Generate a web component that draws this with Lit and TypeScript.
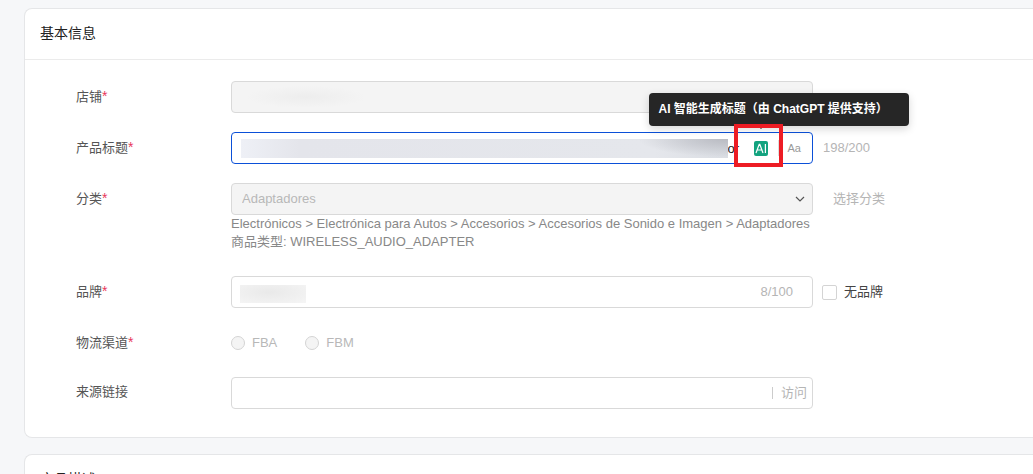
import { LitElement, html, css } from "lit";
import { customElement } from "lit/decorators.js";

@customElement("app-root")
export class AppRoot extends LitElement {
  static styles = css`
    :host {
      display: block;
      height: 100vh;
      overflow: hidden;
      background: #f6f7f9;
      color: #555;
      font: 13px/18px "Liberation Sans", "Noto Sans CJK SC", sans-serif;
    }
    * {
      box-sizing: border-box;
    }
    input,
    select,
    button {
      font: inherit;
      color: inherit;
      margin: 0;
      padding: 0;
      border: 0;
      background: none;
      outline: none;
    }
    .page {
      display: flex;
      flex-direction: column;
      gap: 16px;
      padding: 8px 0 0 24px;
    }
    .card {
      background: #fff;
      border: 1px solid #e5e6e8;
      border-right: 0;
      border-radius: 8px 0 0 8px;
    }
    .card-title {
      margin: 0;
      padding: 12px 15px 14px;
      border-bottom: 1px solid #ebebeb;
      font-size: 14px;
      line-height: 24px;
      font-weight: 400;
      color: #222;
    }
    .form {
      display: flex;
      flex-direction: column;
      gap: 19px;
      padding: 21px 16px 28px 51px;
    }
    .row {
      display: grid;
      grid-template-columns: 155px minmax(0, 582px) auto;
      justify-content: start;
    }
    .label {
      line-height: 30px;
    }
    .star {
      font-size: 14px;
      color: #e8385b;
    }
    .box {
      position: relative;
      display: flex;
      align-items: center;
      height: 32px;
      border: 1px solid #d9d9d9;
      border-radius: 4px;
      background: #fff;
    }
    .box.disabled {
      background: #f4f4f4;
      color: #b8b8b8;
    }
    .box.active {
      border-color: #0b50d8;
    }
    .text {
      flex: 1;
      min-width: 0;
      height: 30px;
      padding: 0 10px;
    }
    .text.tail {
      flex: 0 0 26px;
      padding: 0;
      color: #222;
    }
    .select {
      appearance: none;
      opacity: 1;
    }
    .chevron {
      width: 10px;
      height: 10px;
      margin-right: 7px;
    }
    .mask {
      flex: none;
    }
    .mask.shop {
      width: 120px;
      height: 22px;
      margin-left: 14px;
      background: radial-gradient(closest-side, #ededed, #f4f4f4);
    }
    .mask.title {
      flex: 1;
      height: 19px;
      margin-left: 9px;
      background:
        radial-gradient(ellipse 90px 18px at 100% 0, #b9bbc2, transparent),
        linear-gradient(90deg, #eef0f6, #e4e5eb 12%, #e5e7ec 85%, #dadde3);
    }
    .mask.brand {
      width: 66px;
      height: 18px;
      margin: 3px 0 0 8px;
      background: radial-gradient(ellipse at 45% 40%, #e9e9e9, #f5f5f5);
    }
    .side {
      padding-left: 10px;
      line-height: 31px;
      color: #b5b5b5;
    }
    .side.link {
      padding-left: 20px;
    }
    .count {
      margin-right: 19px;
      color: #b5b5b5;
    }
    .help {
      margin: 0;
      padding-bottom: 6px;
      color: #888;
    }
    .case {
      padding: 0 11px 0 9px;
      font-size: 11px;
      color: #999;
    }
    .case-line {
      width: 1px;
      height: 16px;
      background: #ddd;
    }
    .ai {
      position: relative;
      display: flex;
      padding: 0 10px 0 0;
    }
    .ai-button {
      width: 14px;
      height: 15px;
      border-radius: 2px;
      background: #13a37f;
      display: block;
    }
    .ai-button svg {
      display: block;
    }
    .tip {
      position: absolute;
      left: -105px;
      bottom: 30px;
      padding: 7px 10px 8px;
      width: 260px;
      white-space: nowrap;
      border-radius: 4px;
      background: #262626;
      color: #fff;
      font-weight: 700;
      font-size: 12px;
      box-shadow: 0 3px 8px rgba(0, 0, 0, 0.16);
    }
    .tip::after {
      content: "";
      position: absolute;
      left: 109px;
      top: 100%;
      border: 3px solid transparent;
      border-top-color: #262626;
      border-bottom: 0;
    }
    .mark {
      position: absolute;
      left: -20px;
      top: -17px;
      width: 49px;
      height: 43px;
      border: 4px solid #ed1c24;
      pointer-events: none;
    }
    .choices {
      display: flex;
      align-items: center;
      gap: 28px;
      height: 31px;
      color: #b8b8b8;
    }
    .choice {
      display: flex;
      align-items: center;
      gap: 7px;
    }
    .choice.check {
      padding-left: 9px;
      color: #444;
      height: 32px;
    }
    .tick {
      appearance: none;
      width: 15px;
      height: 15px;
      border: 1px solid #d4d4d4;
      border-radius: 2px;
      background: #fff;
    }
    .tick.round {
      width: 14px;
      height: 14px;
      border-radius: 50%;
      background: #f4f4f4;
    }
    .visit {
      padding: 0 5px 0 8px;
      color: #b5b5b5;
    }
    .visit-line {
      width: 1px;
      height: 12px;
      background: #ccc;
    }
  `;

  private label(text: string, id: string, required = true) {
    return html`<label class="label" for=${id}
      >${text}${required ? html`<span class="star">*</span>` : ""}</label
    >`;
  }

  render() {
    return html`
      <main class="page">
        <section class="card">
          <h2 class="card-title">基本信息</h2>
          <form class="form">
            <div class="row">
              ${this.label("店铺", "shop")}
              <div class="box disabled">
                <span class="mask shop"></span>
                <input class="text" id="shop" disabled />
              </div>
            </div>
            <div class="row">
              ${this.label("产品标题", "title")}
              <div class="box active">
                <span class="mask title"></span>
                <input class="text tail" id="title" value="or" />
                <div class="ai">
                  <button class="ai-button" type="button" aria-label="AI">
                    <svg width="14" height="15" viewBox="0 0 14 15" fill="none" stroke="#fff" stroke-width="1.2">
                      <path d="M2 12 5.2 3.3h.6L9 12M3.2 9h4.6M11.4 3v9" />
                    </svg>
                  </button>
                  <div class="tip" role="tooltip">AI 智能生成标题（由 ChatGPT 提供支持）</div>
                  <span class="mark"></span>
                </div>
                <span class="case-line"></span>
                <button class="case" type="button">Aa</button>
              </div>
              <span class="side">198/200</span>
            </div>
            <div class="row">
              ${this.label("分类", "category")}
              <div>
                <div class="box disabled">
                  <select class="text select" id="category" disabled>
                    <option>Adaptadores</option>
                  </select>
                  <svg class="chevron" viewBox="0 0 10 10" fill="none" stroke="#555" stroke-width="1.2">
                    <path d="M1 3l4 4 4-4" />
                  </svg>
                </div>
                <p class="help">
                  Electrónicos &gt; Electrónica para Autos &gt; Accesorios &gt; Accesorios de Sonido e Imagen &gt;
                  Adaptadores<br />商品类型: WIRELESS_AUDIO_ADAPTER
                </p>
              </div>
              <span class="side link">选择分类</span>
            </div>
            <div class="row">
              ${this.label("品牌", "brand")}
              <div class="box">
                <span class="mask brand"></span>
                <input class="text" id="brand" />
                <span class="count">8/100</span>
              </div>
              <label class="choice check"><input class="tick" type="checkbox" />无品牌</label>
            </div>
            <div class="row">
              ${this.label("物流渠道", "fba")}
              <div class="choices">
                <label class="choice"><input class="tick round" id="fba" type="radio" name="channel" disabled />FBA</label>
                <label class="choice"><input class="tick round" type="radio" name="channel" disabled />FBM</label>
              </div>
            </div>
            <div class="row">
              ${this.label("来源链接", "source", false)}
              <div class="box">
                <input class="text" id="source" />
                <span class="visit-line"></span>
                <button class="visit" type="button">访问</button>
              </div>
            </div>
          </form>
        </section>
        <section class="card">
          <h2 class="card-title">产品描述</h2>
        </section>
      </main>
    `;
  }
}
